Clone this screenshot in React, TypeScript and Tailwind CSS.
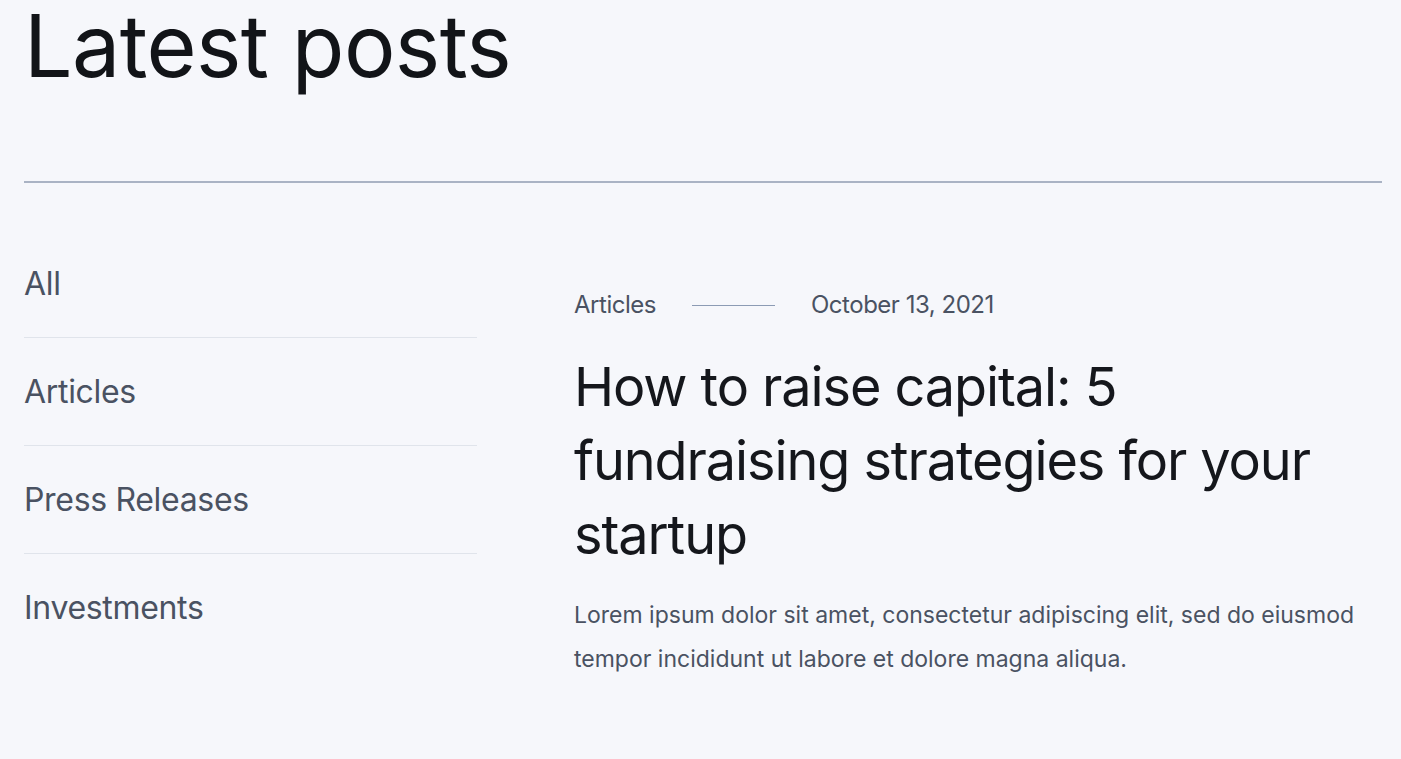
const categories = ["All", "Articles", "Press Releases", "Investments"]

export default function App() {
    return (
        <main
            className="min-h-screen bg-[#f6f7fb] pl-6 pr-[19px]"
            style={{ fontFamily: "Inter, 'Noto Sans', sans-serif" }}
        >
            <h1 className="text-[86px] leading-[92px] tracking-[-0.007em] text-[#121418]">Latest posts</h1>
            <div className="mt-[89px] h-[2px] w-full bg-[#aab3c4]" />

            <section className="flex pt-[47px]">
                <ul className="flex w-[453px] shrink-0 flex-col">
                    {categories.map((c, i) => (
                        <li
                            key={c}
                            className={
                                i < categories.length - 1
                                    ? "border-b border-[#e0e4eb] pt-[34px] pb-[33px] text-[32px] tracking-[-0.01em] text-[#4a5262]"
                                    : "pt-[34px] pb-[33px] text-[32px] tracking-[-0.01em] text-[#4a5262]"
                            }
                        >
                            <span className="block leading-[40px]">{c}</span>
                        </li>
                    ))}
                </ul>

                <article className="ml-[97px] flex max-w-[808px] flex-col pt-[59px]">
                    <div className="flex items-center text-[24px] leading-[32px] tracking-[-0.02em] text-[#4a5262]">
                        <span>Articles</span>
                        <span className="mx-9 h-px w-[83px] bg-[#8c9bb4]" />
                        <span>October 13, 2021</span>
                    </div>
                    <h2 className="mt-[29px] text-[54px] leading-[74px] tracking-[-0.02em] text-[#15171c]">
                        How to raise capital: 5<br />
                        fundraising strategies for your<br />
                        startup
                    </h2>
                    <p className="mt-[21px] text-[23px] leading-[44px] text-[#4a5262]">
                        Lorem ipsum dolor sit amet, consectetur adipiscing elit, sed do eiusmod
                        <br />
                        tempor incididunt ut labore et dolore magna aliqua.
                    </p>
                </article>
            </section>
        </main>
    )
}
